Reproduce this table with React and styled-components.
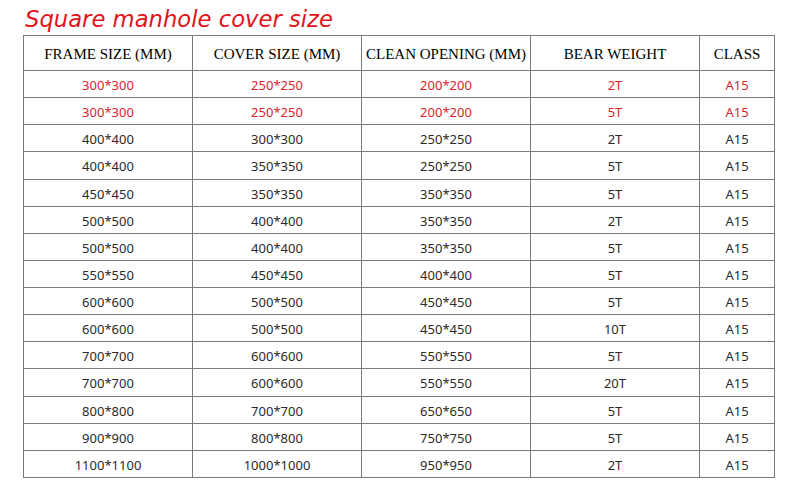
import React from 'react';
import styled, { createGlobalStyle } from 'styled-components';

const GlobalStyle = createGlobalStyle`
  html, body {
    margin: 0;
    padding: 0;
    background: #ffffff;
  }
`;

const Page = styled.div`
  width: 800px;
  height: 494px;
  background: #fff;
  overflow: hidden;
`;

const Title = styled.h1`
  margin: 0;
  padding: 5px 0 0 25px;
  height: 35px;
  box-sizing: border-box;
  font-family: "DejaVu Sans", Verdana, sans-serif;
  font-style: italic;
  font-weight: normal;
  font-size: 22.7px;
  line-height: 28px;
  color: #e0151b;
`;

// 15 data rows spread over 407px, so two of them are a pixel taller
const Grid = styled.div`
  margin-left: 23px;
  width: 752px;
  display: grid;
  grid-template-columns: 169px 169px 169px 169px 75px;
  grid-template-rows: 35px repeat(3, 27px) 28px repeat(7, 27px) 28px repeat(3, 27px);
  border-left: 1px solid #7a7a7a;
  border-top: 1px solid #7a7a7a;
  box-sizing: border-box;
`;

const CellBase = styled.div`
  box-sizing: border-box;
  border-right: 1px solid #7a7a7a;
  border-bottom: 1px solid #7a7a7a;
  display: flex;
  align-items: center;
  justify-content: center;
  white-space: nowrap;
`;

const HeadCell = styled(CellBase)`
  padding-top: 3px;
  font-family: "Liberation Serif", "Times New Roman", serif;
  font-size: 15px;
  color: #000;
`;

const Cell = styled(CellBase)`
  padding-top: 1px;
  font-family: "Noto Sans", "Liberation Sans", sans-serif;
  font-size: 13px;
  color: ${p => (p.$red ? '#d8242c' : '#2a2a2a')};
`;

const headers = ['FRAME SIZE (MM)', 'COVER SIZE (MM)', 'CLEAN OPENING (MM)', 'BEAR WEIGHT', 'CLASS'];

const rows = [
  ['300*300', '250*250', '200*200', '2T', 'A15', true],
  ['300*300', '250*250', '200*200', '5T', 'A15', true],
  ['400*400', '300*300', '250*250', '2T', 'A15'],
  ['400*400', '350*350', '250*250', '5T', 'A15'],
  ['450*450', '350*350', '350*350', '5T', 'A15'],
  ['500*500', '400*400', '350*350', '2T', 'A15'],
  ['500*500', '400*400', '350*350', '5T', 'A15'],
  ['550*550', '450*450', '400*400', '5T', 'A15'],
  ['600*600', '500*500', '450*450', '5T', 'A15'],
  ['600*600', '500*500', '450*450', '10T', 'A15'],
  ['700*700', '600*600', '550*550', '5T', 'A15'],
  ['700*700', '600*600', '550*550', '20T', 'A15'],
  ['800*800', '700*700', '650*650', '5T', 'A15'],
  ['900*900', '800*800', '750*750', '5T', 'A15'],
  ['1100*1100', '1000*1000', '950*950', '2T', 'A15'],
];

export default function App() {
  return (
    <Page>
      <GlobalStyle />
      <Title>Square manhole cover size</Title>
      <Grid>
        {headers.map(label => (
          <HeadCell key={label}>{label}</HeadCell>
        ))}
        {rows.map((r, i) =>
          r.slice(0, 5).map((v, j) => (
            <Cell key={`${i}-${j}`} $red={r[5]}>{v}</Cell>
          ))
        )}
      </Grid>
    </Page>
  );
}
